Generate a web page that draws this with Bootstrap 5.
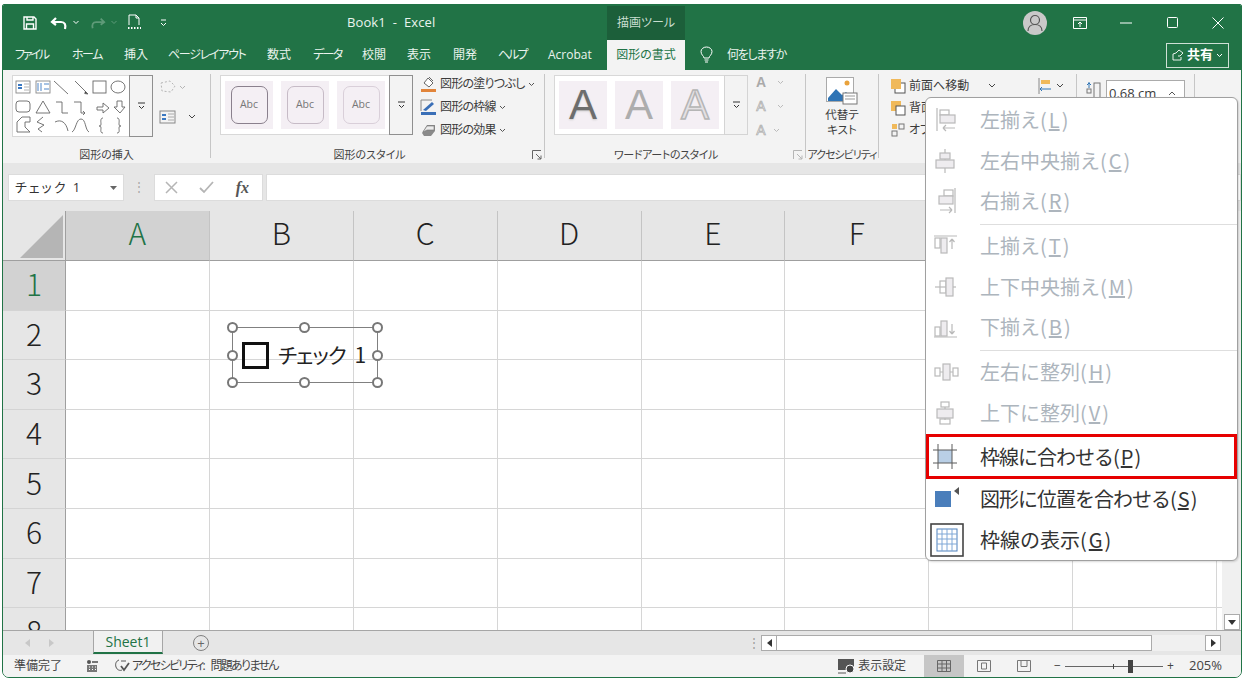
<!DOCTYPE html>
<html lang="ja">
<head>
<meta charset="utf-8">
<title>Book1 - Excel</title>
<link href="https://cdn.jsdelivr.net/npm/bootstrap@5.3.0/dist/css/bootstrap.min.css" rel="stylesheet">
<style>
html,body{margin:0;height:683px;overflow:hidden;background:#fff}
body{font-family:"Open Sans","Noto Sans CJK JP",sans-serif;font-feature-settings:"palt";color:#333;font-size:12px}
.win{position:relative;width:1240px;height:674px;margin:4px 0 0 2px;border:1px solid #217346;border-radius:2px 2px 7px 7px;overflow:hidden}
.titlebar{height:35px;background:#217346;color:#fff}
.qat{width:300px;padding-left:19px;gap:5px}
.qat svg{flex:none}
.qs1{margin-left:7px}.qs2{margin-left:6px}.qs3{margin-left:5px}.qs4{margin-left:13px}
.tb-title{width:304px;padding-left:44px;font-size:13px;letter-spacing:.1px;color:#eaf3ee}
.ctx{width:78px;height:34px;margin-top:1px;background:#1c5f3a;color:#c8ddd0;font-size:12px}
.wbtns{margin-left:auto;padding-right:0}
.avatar{width:24px;height:24px;border-radius:50%;background:#c9c9c9;margin-right:10px}
.wb{width:46px}
.tabbar{height:30px;background:#217346;color:#eaf3ee;padding-left:12px}
.tabitem{flex:none;white-space:nowrap;font-size:12px}
.t1{width:57px;letter-spacing:-2.2px}.t2{width:52px;letter-spacing:-1.5px}.t3{width:44px}.t4{width:99px;letter-spacing:-1.3px}.t5{width:46px}.t6{width:49px;letter-spacing:-1.6px}.t7{width:45px}.t8{width:46px}.t9{width:45px}.t10{width:50px;letter-spacing:-2px}.t11{width:59px}
.tabactive{width:78px;height:30px;background:#f3f3f3;color:#217346;flex:none}
.tellme{margin-left:15px;gap:14px;font-size:12px;letter-spacing:-1.3px}
.sharebtn{margin-left:auto;margin-right:12px;width:63px;height:25px;border:1px solid #cfe0d6;color:#fff;font-weight:700;font-size:13px;gap:3px}
.ribbon{height:93px;background:#f3f3f3;color:#3b3b3b}
.rg{position:relative;height:84px;margin-top:4px;border-right:1px solid #c6c6c6;flex:none;display:flex;flex-direction:column;justify-content:space-between}
.rg1{width:208px}.rg2{width:334px}.rg3{width:261px}.rg4{width:73px}.rg5{width:198px}.rg6{width:118px}
.rbody{display:flex;padding:1px 0 0 9px}
.rlabel{text-align:center;font-size:11px;line-height:15px;color:#444;white-space:nowrap;margin-bottom:-4px}
.pr16{padding-right:16px}.pr18{padding-right:18px;letter-spacing:-.4px}
.rl4{letter-spacing:-1px}
.launcher{position:absolute;right:2px;bottom:-2px}
.gal{height:62px;background:#fff;border:1px solid #d8d8d8;display:flex;flex:none}
.gal1{width:141px}.gal2{width:193px;height:60px}.gal3{width:194px;height:60px}
.more{margin-left:auto;width:24px;background:#f3f3f3;border:1px solid #8f8f8f;margin-top:-1px;margin-bottom:-1px;margin-right:-1px}
.more3{border-color:#d4d4d4}
.swatch{width:48px;height:48px;background:#f4eff4;margin:5px 0 0 4px;flex:none}
.swatch+.swatch{margin-left:8px}
.abc{width:37px;height:38px;border-radius:7px;background:#f4eff4;font-size:10.5px;color:#777;border:1px solid #d9cfd9}
.abc1{border:1.5px solid #8a808d}
.abc2{border-color:#c6bbc6}
.wa{font-family:"Liberation Sans",sans-serif;font-size:42px;line-height:48px;text-align:center;color:#6d6d6d}
.wa1{text-shadow:0 1px 2px #ccc}
.wa2{color:#adadad}
.wa3{color:#e4e1e4;-webkit-text-stroke:1.5px #b5b5b5}
.stk{display:flex;flex-direction:column;flex:none}
.stk1{margin-left:6px;gap:10px;padding-top:2px}
.stk2{margin-left:7px;width:118px;gap:3px;margin-top:-1px;letter-spacing:-.75px}
.stk3{margin-left:5px;width:40px;gap:4px;margin-top:-3px}
.rrow{display:flex;align-items:center;height:20px;gap:3px;white-space:nowrap;font-size:12px}
.aletter{font-family:"Liberation Sans",sans-serif;font-size:14px;font-weight:700;color:#aaa;width:16px;text-align:center}
.aout{font-weight:400;color:#fff;-webkit-text-stroke:.7px #aaa}
.alt{width:72px;padding-top:3px;text-align:center;font-size:11.5px;line-height:15px}
.stk5{margin-left:3px;width:147px;gap:2px;padding-top:1px}
.stk5a{width:40px;padding-top:1px}
.hgt{width:79px;height:26px;background:#fff;border:1px solid #ababab;font-size:13px;padding:2px 0 0 2px;margin-left:4px;margin-top:6px;white-space:nowrap;align-items:center}
.fbar{height:48px;background:#e6e6e6;padding:11px 0 0 5px}
.namebox{width:116px;height:27px;background:#fff;border:1px solid #dcdcdc;font-size:13px;letter-spacing:2px;padding:0 6px}
.dots{width:30px;color:#a8a8a8}
.fxbox{width:109px;height:27px;background:#fff;border:1px solid #dcdcdc;color:#b5b5b5;padding:0 13px 0 10px}
.fx{font-family:"Liberation Serif",serif;font-style:italic;font-weight:700;color:#555;font-size:16px}
.finput{flex:1;height:27px;background:#fff;margin-left:3px;border:1px solid #dcdcdc}
.sheet{position:relative;height:419px;background:#fff}
.sgrid{display:grid;grid-template-columns:63px repeat(8,143.875px) 6px;grid-auto-rows:49.6px;grid-template-rows:50px;width:1219px;height:419px;overflow:hidden}
.c{border-right:1px solid #d6d6d6;border-bottom:1px solid #d6d6d6}
.h{background:#e6e6e6;font-size:30px;font-weight:300;color:#222;display:flex;align-items:center;justify-content:center;border-right:1px solid #c4c4c4;border-bottom:1px solid #9f9f9f;line-height:1;padding-bottom:7px;font-family:"Noto Sans CJK JP","Open Sans",sans-serif}
.r{border-bottom:1px solid #d4d4d4;border-right:1px solid #9f9f9f;padding-bottom:4px}
.hs{background:#d2d2d2;color:#217346}
.corner{background:#e6e6e6;border-bottom:1px solid #9f9f9f;border-right:1px solid #9f9f9f;display:flex;align-items:flex-end;justify-content:flex-end;padding:0 2px 2px 0}
.tri{width:43px;height:43px;background:#b5b5b5;clip-path:polygon(100% 0,100% 100%,0 100%)}
.vscroll{position:absolute;right:0;top:0;bottom:0;width:19px;background:#f0f0f0;display:flex;flex-direction:column;justify-content:flex-end;align-items:center}
.varrow{width:16px;height:16px;background:#fff;border:1px solid #ababab}
.shp{position:absolute;left:229px;top:116px;width:146px;height:56px;border:1px solid #808080;display:flex;align-items:center;font-family:"Noto Sans CJK JP",sans-serif;font-size:21px;color:#222}
.cbx{width:27px;height:27px;border:3px solid #111;margin:0 9px 0 9px;flex:none}
.shptext{letter-spacing:-1px;word-spacing:5px}
.hd{position:absolute;width:11px;height:11px;border-radius:50%;background:#fff;border:2px solid #777}
.hl{left:-6px}.hm{left:66px}.hr{right:-6px}
.ht{top:-6px}.hc{top:22px}.hb{bottom:-6px}
.stabs{height:25px;background:#e6e6e6;border-top:1px solid #a6a6a6;position:relative}
.sarrows{width:90px;padding-left:22px;gap:19px;color:#bbb}
.stab{width:70px;height:23px;margin-top:-1px;background:#f1f1f1;border-left:1px solid #a6a6a6;border-right:1px solid #a6a6a6;border-bottom:2px solid #217346;color:#217346;font-size:14px}
.plus{width:16px;height:16px;border-radius:50%;border:1px solid #808080;margin-left:30px;color:#666;font-size:13px;line-height:1}
.sdots{margin-left:537px;width:15px;color:#9c9c9c}
.hscroll{width:460px;height:16px;background:#f0f0f0}
.hbtn{width:16px;height:16px;background:#fff;border:1px solid #ababab;flex:none;font-size:8px;line-height:1;color:#333}
.hthumb{width:375px;height:16px;background:#fff;border:1px solid #ababab;border-left:0;flex:none}
.status{height:22px;background:#f3f3f3;font-size:12px;color:#444;padding-left:11px;white-space:nowrap}
.acc{letter-spacing:-1.7px;word-spacing:5px}
.st-view{margin-left:auto;padding-right:19px}
.disp{margin-right:18px;margin-left:1px;letter-spacing:-.1px}
.vw{width:40px;height:22px}
.vw-on{background:#c6c6c6}
.zoomer{width:120px;margin-left:10px}
.zoom-t{position:relative;width:100px;height:1px;background:#666;margin:0 4px}
.zk{position:absolute;left:63px;top:-6px;width:5px;height:13px;background:#444}
.ztick{position:absolute;left:48px;top:-2px;width:1px;height:5px;background:#444}
.zpct{font-size:13px;margin-left:15px}
.ctxmenu{display:block;position:absolute;left:922px;top:92px;width:313px;height:464px;min-width:0;padding:2px 0 0;margin:0;border:1px solid #a0a0a0;border-radius:6px;background:#fff;z-index:10;box-shadow:1px 1px 2px rgba(0,0,0,.15)}
.mi{display:flex;align-items:center;height:40.5px;padding:0 0 0 8px;gap:20px;font-size:20px;line-height:1;color:#bdbdbd;white-space:nowrap;font-family:"Noto Sans CJK JP",sans-serif;font-feature-settings:normal;background:transparent}
.mi u{margin:0 2px}
.mi svg{flex:none;overflow:visible}
.mi.on{color:#333}
.mi.redbox{height:45px;border:3px solid #e60000;padding-left:5px;margin-top:1px}
.tightk{letter-spacing:-1px}
.sepx{height:1px;margin:2px 0 1.5px 54px;background:#dedede}
.ds{fill:none;stroke:#b9b9b9;stroke-width:1.2}
.dsf{fill:#eeecef;stroke:#b9b9b9;stroke-width:1.2}
</style>
</head>
<body>
<div class="win">

  <div class="titlebar d-flex align-items-center">
    <div class="qat d-flex align-items-center">
      <svg width="16" height="16" viewBox="0 0 16 16" fill="none" stroke="#fff" stroke-width="1.4"><path d="M2 2h10l2 2v10H2z"/><path d="M5 2v3h6V2M4.500 14V9h7v5"/></svg>
      <svg class="qs1" width="18" height="14" viewBox="0 0 18 14" fill="none" stroke="#fff" stroke-width="2.200"><path d="M6 2 2 6l4 3M2 6h9c4 0 5 3 4 7"/></svg>
      <svg width="6" height="5" viewBox="0 0 6 5" fill="none" stroke="#fff"><path d="m.5 1 2.500 2.500L5.500 1"/></svg>
      <svg class="qs2" width="16" height="14" viewBox="0 0 18 14" fill="none" stroke="#5e9a78" stroke-width="2"><path d="m12 2 4 4-4 3M16 6H7c-4 0-5 3-4 7"/></svg>
      <svg width="6" height="5" viewBox="0 0 6 5" fill="none" stroke="#5e9a78"><path d="m.5 1 2.500 2.500L5.500 1"/></svg>
      <svg class="qs3" width="15" height="17" viewBox="0 0 15 17" fill="none" stroke="#fff"><path d="M2 11V1h7l3 3v7M9 1v3h3"/><path stroke-dasharray="1.500 1.500" stroke-width="2" d="M1 14h13"/></svg>
      <svg class="qs4" width="7" height="8" viewBox="0 0 7 8" fill="none" stroke="#fff"><path d="M1 1h5M1 4l2.500 2.500L6 4"/></svg>
    </div>
    <div class="tb-title">Book1&nbsp; - &nbsp;Excel</div>
    <div class="ctx d-flex align-items-center justify-content-center">描画ツール</div>
    <div class="wbtns d-flex align-items-center">
      <div class="avatar d-flex align-items-center justify-content-center">
        <svg width="16" height="18" viewBox="0 0 16 18" fill="none" stroke="#555" stroke-width="1.200"><circle cx="8" cy="6" r="4.500"/><path d="M1 17c0-4 3-6.500 7-6.500s7 2.500 7 6.500"/></svg>
      </div>
      <div class="wb d-flex justify-content-center"><svg width="14" height="12" viewBox="0 0 14 12" fill="none" stroke="#fff"><path d="M.5.500h13v11H.5zM.5 3h13"/><path d="M7 10V5M5 7l2-2 2 2"/></svg></div>
      <div class="wb d-flex justify-content-center"><svg width="12" height="2" viewBox="0 0 12 2"><path stroke="#fff" stroke-width="1.200" d="M0 1h12"/></svg></div>
      <div class="wb d-flex justify-content-center"><svg width="11" height="11" viewBox="0 0 11 11" fill="none" stroke="#fff"><rect x=".5" y=".5" width="10" height="10" rx="1"/></svg></div>
      <div class="wb d-flex justify-content-center"><svg width="12" height="12" viewBox="0 0 12 12" stroke="#fff"><path d="m.5.500 11 11M11.500.500l-11 11"/></svg></div>
    </div>
  </div>

  <div class="tabbar d-flex align-items-center">
    <span class="tabitem t1">ファイル</span><span class="tabitem t2">ホーム</span><span class="tabitem t3">挿入</span><span class="tabitem t4">ページレイアウト</span><span class="tabitem t5">数式</span><span class="tabitem t6">データ</span><span class="tabitem t7">校閲</span><span class="tabitem t8">表示</span><span class="tabitem t9">開発</span><span class="tabitem t10">ヘルプ</span><span class="tabitem t11">Acrobat</span>
    <span class="tabactive d-flex align-items-center justify-content-center">図形の書式</span>
    <span class="tellme d-flex align-items-center">
      <svg width="13" height="18" viewBox="0 0 13 18" fill="none" stroke="#fff"><path d="M4 12c0-2-3-3-3-6.500C1 3 3.500 1 6.500 1S12 3 12 5.500C12 9 9 10 9 12zM4.500 14h4M5 16h3"/></svg>
      何をしますか
    </span>
    <div class="sharebtn d-flex align-items-center justify-content-center">
      <svg width="12" height="12" viewBox="0 0 12 12" fill="none" stroke="#fff" stroke-width=".9"><path d="M1 11V5l3-1 3-3 4 3-3 3H6M1 11h8V8"/></svg>共有
      <svg width="7" height="5" viewBox="0 0 7 5" fill="none" stroke="#fff"><path d="m1 1 2.500 2.500L6 1"/></svg>
    </div>
  </div>

  <div class="ribbon d-flex">
    <div class="rg rg1">
      <div class="rbody">
        <div class="gal gal1">
          <svg width="116" height="60" viewBox="0 0 116 60" fill="none" stroke="#666" stroke-width=".9">
            <rect x="3" y="5" width="14" height="12" stroke="#888"/><path d="M5 9h4M5 12h4" stroke="#3a78c2" stroke-width="2"/><path d="M11 8h5M11 11h5M11 14h5" stroke="#aaa"/>
            <rect x="23" y="5" width="14" height="12" stroke="#888"/><path d="M25 7v8M28 7v8M31 8h5M31 13h5" stroke="#3a78c2"/>
            <path d="m41 5 14 13M62 5l13 13"/><path d="m72 15 3 3-3.500-.5" fill="#444"/>
            <rect x="80" y="5" width="13" height="12"/><ellipse cx="105" cy="11" rx="7" ry="6"/>
            <rect x="3" y="25" width="14" height="11" rx="3"/><path d="m23 37 7-12 7 12z"/><path d="M43 26h6v11h6"/><path d="M61 26h7v11h4m-2-2 2 2-2 2"/>
            <path d="M84 31h6v-4l6 5-6 5v-3h-6zM104 25h5v6h3l-5 6-6-6h3z"/>
            <path d="M4 56V46l5-5h8v5h-5v5l5 5zM30 41l-6 5 7 3-6 4 4 3"/><path d="M42 46c6-3 11 0 13 9M59 56c4-2 4-13 9-13s4 11 8 13"/>
            <path d="M90 42c-3 0-2 4-2 6s-1 2-2 2c1 0 2 0 2 2s-1 5 2 5M104 42c3 0 2 4 2 6s1 2 2 2c-1 0-2 0-2 2s1 5-2 5"/>
          </svg>
          <div class="more d-flex align-items-center justify-content-center"><svg width="9" height="8" viewBox="0 0 9 8" fill="none" stroke="#333"><path d="M1 1h7M2 4l2.500 2.500L7 4"/></svg></div>
        </div>
        <div class="stk stk1">
          <div class="rrow"><svg width="28" height="16" viewBox="0 0 28 16" fill="none" stroke="#b5b5b5"><path stroke-dasharray="2 2" d="M2 4l9-2 5 5-4 6-9-1z"/><path d="m21 7 2.500 2.500L26 7"/></svg></div>
          <div class="rrow"><svg width="18" height="14" viewBox="0 0 18 14" fill="none" stroke="#888"><rect x="1" y="1" width="15" height="12"/><path d="M3 5h4M3 9h4" stroke="#3a78c2" stroke-width="2"/><path d="M9 4h6M9 7h6M9 10h6" stroke="#aaa"/></svg><svg class="ms-2" width="8" height="6" viewBox="0 0 8 6" fill="none" stroke="#444"><path d="m1 1 3 3 3-3"/></svg></div>
        </div>
      </div>
      <div class="rlabel">図形の挿入</div>
    </div>

    <div class="rg rg2">
      <div class="rbody">
        <div class="gal gal2">
          <div class="swatch d-flex align-items-center justify-content-center"><div class="abc abc1 d-flex align-items-center justify-content-center">Abc</div></div>
          <div class="swatch d-flex align-items-center justify-content-center"><div class="abc abc2 d-flex align-items-center justify-content-center">Abc</div></div>
          <div class="swatch d-flex align-items-center justify-content-center"><div class="abc d-flex align-items-center justify-content-center">Abc</div></div>
          <div class="more d-flex align-items-center justify-content-center"><svg width="9" height="8" viewBox="0 0 9 8" fill="none" stroke="#333"><path d="M1 1h7M2 4l2.500 2.500L7 4"/></svg></div>
        </div>
        <div class="stk stk2">
          <div class="rrow"><svg width="17" height="17" viewBox="0 0 17 17"><path d="M1 13h15v3H1z" fill="#e1843a"/><path d="m8 2 5 5-4 4-5-4z" fill="#fff" stroke="#666"/><path d="m9 1 4 4" stroke="#666"/></svg>図形の塗りつぶし<svg width="7" height="5" viewBox="0 0 7 5" fill="none" stroke="#555"><path d="m1 1 2.500 2.500L6 1"/></svg></div>
          <div class="rrow"><svg width="17" height="17" viewBox="0 0 17 17"><path d="M1 13h15v3H1z" fill="#3a6fb7"/><path d="M1 1h11" stroke="#888"/><path d="M1 1v11" stroke="#888"/><path d="m3 11 9-8 2 2-8 7z" fill="#3a6fb7"/></svg>図形の枠線<svg width="7" height="5" viewBox="0 0 7 5" fill="none" stroke="#555"><path d="m1 1 2.500 2.500L6 1"/></svg></div>
          <div class="rrow"><svg width="17" height="17" viewBox="0 0 17 17"><path d="M2 11 7 3h8v6l-4 5H4z" fill="#8a8a8a"/><path d="M3 10 7 4h7v4H7z" fill="#ececec" stroke="#777" stroke-width=".6"/></svg>図形の効果<svg width="7" height="5" viewBox="0 0 7 5" fill="none" stroke="#555"><path d="m1 1 2.500 2.500L6 1"/></svg></div>
        </div>
      </div>
      <div class="rlabel pr16">図形のスタイル</div>
      <svg class="launcher" width="10" height="10" viewBox="0 0 10 10" fill="none" stroke="#666"><path d="M.5 9V.5H9M4 4l5 5M5.500 9H9V5.500"/></svg>
    </div>

    <div class="rg rg3">
      <div class="rbody">
        <div class="gal gal3">
          <div class="swatch wa wa1">A</div>
          <div class="swatch wa wa2">A</div>
          <div class="swatch wa wa3">A</div>
          <div class="more more3 d-flex align-items-center justify-content-center"><svg width="9" height="8" viewBox="0 0 9 8" fill="none" stroke="#333"><path d="M1 1h7M2 4l2.500 2.500L7 4"/></svg></div>
        </div>
        <div class="stk stk3">
          <div class="rrow gap-2"><span class="aletter">A</span><svg width="7" height="5" viewBox="0 0 7 5" fill="none" stroke="#bbb"><path d="m1 1 2.500 2.500L6 1"/></svg></div>
          <div class="rrow gap-2"><span class="aletter aout">A</span><svg width="7" height="5" viewBox="0 0 7 5" fill="none" stroke="#bbb"><path d="m1 1 2.500 2.500L6 1"/></svg></div>
          <div class="rrow gap-1"><span class="aletter aout">A</span><svg width="7" height="5" viewBox="0 0 7 5" fill="none" stroke="#bbb"><path d="m1 1 2.500 2.500L6 1"/></svg></div>
        </div>
      </div>
      <div class="rlabel pr18">ワードアートのスタイル</div>
      <svg class="launcher" width="10" height="10" viewBox="0 0 10 10" fill="none" stroke="#b5b5b5"><path d="M.5 9V.5H9M4 4l5 5M5.500 9H9V5.500"/></svg>
    </div>

    <div class="rg rg4">
      <div class="alt">
        <svg width="32" height="30" viewBox="0 0 32 30"><rect x=".5" y=".5" width="27" height="24" fill="#fff" stroke="#aaa"/><circle cx="21" cy="6" r="2.500" fill="#e9a23b"/><path d="m2 21 8-9 6 6 4-3 6 6v3H2z" fill="#2f74b5"/><rect x="17" y="16" width="14" height="11" fill="#fff" stroke="#777"/><path d="M19 19h10M19 22h10" stroke="#999"/></svg>
        <div>代替テ<br>キスト</div>
      </div>
      <div class="rlabel rl4">アクセシビリティ</div>
    </div>

    <div class="rg rg5">
      <div class="rbody">
        <div class="stk stk5">
          <div class="rrow"><svg width="15" height="15" viewBox="0 0 15 15"><rect x="4" y="4" width="10" height="10" fill="#fff" stroke="#555"/><rect width="10" height="10" fill="#f0b95a"/></svg>前面へ移動<svg class="ms-3" width="8" height="6" viewBox="0 0 8 6" fill="none" stroke="#444"><path d="m1 1 3 3 3-3"/></svg></div>
          <div class="rrow"><svg width="15" height="15" viewBox="0 0 15 15"><rect width="10" height="10" fill="#f0b95a"/><rect x="5" y="5" width="9" height="9" fill="#fff" stroke="#555"/></svg>背面へ移動</div>
          <div class="rrow"><svg width="15" height="15" viewBox="0 0 15 15" fill="none" stroke="#777"><rect x="1" y="1" width="5" height="5" fill="#f0b95a" stroke="none"/><rect x="1" y="8" width="5" height="5"/><rect x="8" y="1" width="5" height="5"/></svg>オブジェクト</div>
        </div>
        <div class="stk stk5a">
          <div class="rrow"><svg width="15" height="16" viewBox="0 0 15 16"><path d="M1 0v16" stroke="#888"/><rect x="3" y="2" width="9" height="4" fill="#f0b95a"/><path d="M2 11h11m-9-2-2 2 2 2" stroke="#2f74b5" fill="none"/></svg><svg width="8" height="6" viewBox="0 0 8 6" fill="none" stroke="#444"><path d="m1 1 3 3 3-3"/></svg></div>
        </div>
      </div>
    </div>

    <div class="rg rg6">
      <div class="d-flex ps-2">
        <svg class="mt-2" width="17" height="20" viewBox="0 0 17 20" fill="none" stroke="#777"><path d="M4 0v6M2 3l2-2 2 2" stroke="#2f74b5"/><rect x="2" y="7" width="4" height="4"/><rect x="9" y="1" width="6" height="18"/></svg>
        <div class="hgt d-flex justify-content-between">0.68 cm <svg class="me-2" width="8" height="6" viewBox="0 0 8 6" fill="none" stroke="#555"><path d="m1 4 3-3 3 3"/></svg></div>
      </div>
    </div>
  </div>

  <div class="fbar d-flex">
    <div class="namebox d-flex align-items-center justify-content-between">チェック 1 <svg width="7" height="4" viewBox="0 0 7 4"><path d="M0 0h7L3.500 4z" fill="#666"/></svg></div>
    <div class="dots d-flex justify-content-center pt-1">⋮</div>
    <div class="fxbox d-flex align-items-center justify-content-between">
      <svg width="13" height="13" viewBox="0 0 13 13" stroke="#b5b5b5" stroke-width="1.500"><path d="m1 1 11 11M12 1 1 12"/></svg>
      <svg width="15" height="13" viewBox="0 0 15 13" fill="none" stroke="#b5b5b5" stroke-width="1.800"><path d="m1 7 4 4 9-10"/></svg>
      <span class="fx">fx</span>
    </div>
    <div class="finput"></div>
  </div>

  <div class="sheet">
    <div class="sgrid">
      <div class="corner"><div class="tri"></div></div><div class="h hs">A</div><div class="h">B</div><div class="h">C</div><div class="h">D</div><div class="h">E</div><div class="h">F</div><div class="h"></div><div class="h"></div><div class="h"></div>
      <div class="h r hs">1</div><div class="c"></div><div class="c"></div><div class="c"></div><div class="c"></div><div class="c"></div><div class="c"></div><div class="c"></div><div class="c"></div><div class="c"></div>
      <div class="h r">2</div><div class="c"></div><div class="c"></div><div class="c"></div><div class="c"></div><div class="c"></div><div class="c"></div><div class="c"></div><div class="c"></div><div class="c"></div>
      <div class="h r">3</div><div class="c"></div><div class="c"></div><div class="c"></div><div class="c"></div><div class="c"></div><div class="c"></div><div class="c"></div><div class="c"></div><div class="c"></div>
      <div class="h r">4</div><div class="c"></div><div class="c"></div><div class="c"></div><div class="c"></div><div class="c"></div><div class="c"></div><div class="c"></div><div class="c"></div><div class="c"></div>
      <div class="h r">5</div><div class="c"></div><div class="c"></div><div class="c"></div><div class="c"></div><div class="c"></div><div class="c"></div><div class="c"></div><div class="c"></div><div class="c"></div>
      <div class="h r">6</div><div class="c"></div><div class="c"></div><div class="c"></div><div class="c"></div><div class="c"></div><div class="c"></div><div class="c"></div><div class="c"></div><div class="c"></div>
      <div class="h r">7</div><div class="c"></div><div class="c"></div><div class="c"></div><div class="c"></div><div class="c"></div><div class="c"></div><div class="c"></div><div class="c"></div><div class="c"></div>
      <div class="h r">8</div><div class="c"></div><div class="c"></div><div class="c"></div><div class="c"></div><div class="c"></div><div class="c"></div><div class="c"></div><div class="c"></div><div class="c"></div>
    </div>
    <div class="shp">
      <span class="hd hl ht"></span><span class="hd hm ht"></span><span class="hd hr ht"></span>
      <span class="hd hl hc"></span><span class="hd hr hc"></span>
      <span class="hd hl hb"></span><span class="hd hm hb"></span><span class="hd hr hb"></span>
      <span class="cbx"></span><span class="shptext">チェック 1</span>
    </div>
    <div class="vscroll"><div class="varrow d-flex align-items-center justify-content-center"><svg width="8" height="5" viewBox="0 0 8 5"><path d="M0 0h8L4 5z" fill="#333"/></svg></div></div>
  </div>

  <div class="stabs d-flex align-items-center">
    <div class="sarrows d-flex">
      <svg width="5" height="8" viewBox="0 0 5 8"><path d="M5 0v8L0 4z" fill="#c8c8c8"/></svg>
      <svg width="5" height="8" viewBox="0 0 5 8"><path d="M0 0v8l5-4z" fill="#c8c8c8"/></svg>
    </div>
    <div class="stab d-flex align-items-center justify-content-center">Sheet1</div>
    <div class="plus d-flex align-items-center justify-content-center">+</div>
    <div class="sdots d-flex justify-content-center">⋮</div>
    <div class="hscroll d-flex">
      <div class="hbtn d-flex align-items-center justify-content-center"><svg width="5" height="8" viewBox="0 0 5 8"><path d="M5 0v8L0 4z" fill="#333"/></svg></div>
      <div class="hthumb"></div>
      <div class="hbtn ms-auto d-flex align-items-center justify-content-center"><svg width="5" height="8" viewBox="0 0 5 8"><path d="M0 0v8l5-4z" fill="#333"/></svg></div>
    </div>
  </div>

  <div class="status d-flex align-items-center">
    <span>準備完了</span>
    <svg class="ms-4" width="12" height="12" viewBox="0 0 12 12"><circle cx="3" cy="2" r="2" fill="#555"/><path d="M6 1h6v2H6zM1 5h10v7H1z" fill="#777"/><path d="M3 7h1M6 7h1M9 7h1M3 9.500h1M6 9.500h1M9 9.500h1" stroke="#fff"/></svg>
    <svg class="ms-3" width="18" height="14" viewBox="0 0 18 14" fill="none" stroke="#555"><path d="M5 1C2 2 1 5 2 8s4 4 6 3"/><path d="M7 7l3 4 5-7" stroke-width="1.800"/><path d="M7 2h5"/></svg>
    <span class="acc">アクセシビリティ: 問題ありません</span>
    <div class="st-view d-flex align-items-center">
      <svg width="20" height="15" viewBox="0 0 20 15"><rect x="1" y="0" width="16" height="11" fill="#555"/><path d="M1 14h8" stroke="#555"/><circle cx="13" cy="10" r="4" fill="#444" stroke="#fff"/></svg>
      <span class="disp">表示設定</span>
      <div class="vw vw-on d-flex align-items-center justify-content-center"><svg width="14" height="12" viewBox="0 0 14 12" fill="none" stroke="#666"><path d="M.5.500h13v11H.5zM.5 4h13M.5 8h13M5 .500v11M9.500.500v11"/></svg></div>
      <div class="vw d-flex align-items-center justify-content-center"><svg width="14" height="12" viewBox="0 0 14 12" fill="none" stroke="#777"><path d="M.5.500h13v11H.5zM4.500 3h5v6h-5z"/></svg></div>
      <div class="vw d-flex align-items-center justify-content-center"><svg width="14" height="12" viewBox="0 0 14 12" fill="none" stroke="#777"><path d="M.5.500h13v11H.5zM4 .500v6h6v-6"/></svg></div>
      <div class="zoomer d-flex align-items-center">
        <span>−</span><div class="zoom-t"><span class="ztick"></span><span class="zk"></span></div><span>+</span>
      </div>
      <span class="zpct">205%</span>
    </div>
  </div>

  <div class="dropdown-menu ctxmenu">
    <div class="dropdown-item disabled mi"><svg width="26" height="32"><path class="ds" d="M3 4v23M9 24h12M9 24l3-3M9 24l3 3"/><rect class="ds" x="6" y="6" width="9" height="5"/><rect class="dsf" x="6" y="11" width="15" height="8"/></svg><span>左揃え(<u>L</u>)</span></div>
    <div class="dropdown-item disabled mi"><svg width="26" height="32"><path class="ds" d="M11 4v24"/><rect class="dsf" x="6" y="8" width="10" height="6"/><rect class="dsf" x="2" y="15" width="18" height="8"/></svg><span>左右中央揃え(<u>C</u>)</span></div>
    <div class="dropdown-item disabled mi"><svg width="26" height="32"><path class="ds" d="M21 3v25M6 25h12M18 25l-3-3M18 25l-3 3"/><rect class="ds" x="10" y="5" width="9" height="6"/><rect class="dsf" x="5" y="11" width="14" height="8"/></svg><span>右揃え(<u>R</u>)</span></div>
    <div class="sepx"></div>
    <div class="dropdown-item disabled mi"><svg width="26" height="32"><path class="ds" d="M0 6h23M18 19V9M18 9l-2.500 3M18 9l2.500 3"/><rect class="ds" x="1" y="8" width="5" height="10"/><rect class="dsf" x="7" y="8" width="6" height="15"/></svg><span>上揃え(<u>T</u>)</span></div>
    <div class="dropdown-item disabled mi"><svg width="26" height="32"><path class="ds" d="M1 16h21"/><rect class="ds" x="6" y="10" width="6" height="12"/><rect class="dsf" x="12" y="7" width="7" height="18"/></svg><span>上下中央揃え(<u>M</u>)</span></div>
    <div class="dropdown-item disabled mi"><svg width="26" height="32"><path class="ds" d="M0 26h23M18 13v10M18 23l-2.500-3M18 23l2.500-3"/><rect class="ds" x="1" y="16" width="5" height="9"/><rect class="dsf" x="7" y="10" width="6" height="15"/></svg><span>下揃え(<u>B</u>)</span></div>
    <div class="sepx"></div>
    <div class="dropdown-item disabled mi"><svg width="26" height="32"><rect class="ds" x="1" y="12" width="5" height="8"/><path class="ds" d="M6 16h3M16 16h3"/><rect class="dsf" x="9" y="8" width="7" height="16"/><rect class="ds" x="19" y="12" width="5" height="8"/></svg><span>左右に整列(<u>H</u>)</span></div>
    <div class="dropdown-item disabled mi"><svg width="26" height="32"><rect class="ds" x="7" y="5" width="8" height="5"/><path class="ds" d="M11 10v3M11 20v3"/><rect class="dsf" x="3" y="12" width="16" height="9"/><rect class="ds" x="6" y="22" width="10" height="5"/></svg><span>上下に整列(<u>V</u>)</span></div>
    <div class="dropdown-item mi on redbox"><svg width="26" height="32"><rect x="4" y="9" width="14" height="13" fill="#b9cfe6"/><path d="M-1 9h24M-1 22h24M4 3v25M18 3v25" stroke="#5a5a5a" fill="none"/></svg><span class="tightk">枠線に合わせる(<u>P</u>)</span></div>
    <div class="dropdown-item mi on"><svg width="26" height="32"><rect x="1" y="8" width="16" height="16" fill="#4a7ebb"/><path d="m25 4-5 4 5 4z" fill="#555"/></svg><span class="tightk">図形に位置を合わせる(<u>S</u>)</span></div>
    <div class="dropdown-item mi on"><svg width="26" height="32"><rect x="-3" y="0" width="32" height="32" fill="#fff" stroke="#444" stroke-width="1.600"/><rect x="3" y="5" width="20" height="22" fill="#fff" stroke="#4f81bd"/><path d="M3 10h20M3 15h20M3 20h20M8 5v22M13 5v22M18 5v22" stroke="#7fa7d6"/></svg><span>枠線の表示(<u>G</u>)</span></div>
  </div>

</div>
<script src="https://cdn.jsdelivr.net/npm/bootstrap@5.3.0/dist/js/bootstrap.bundle.min.js"></script>
</body>
</html>
